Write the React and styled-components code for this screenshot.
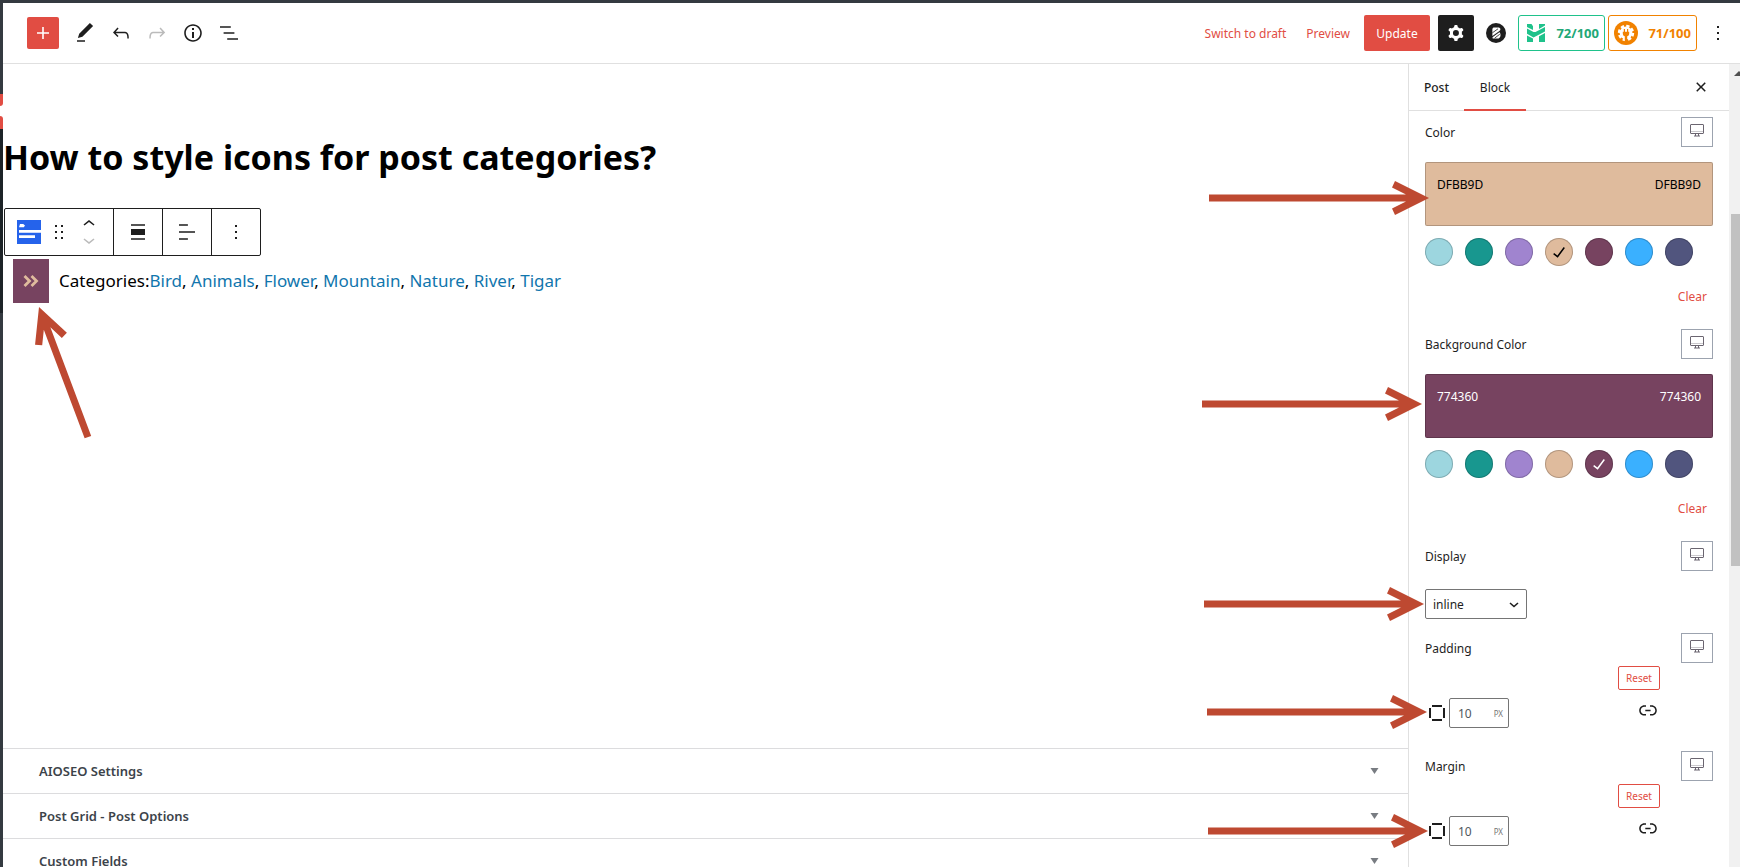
import React from "react";
import styled, { createGlobalStyle } from "styled-components";

const GlobalStyle = createGlobalStyle`
  * { box-sizing: border-box; }
  body {
    margin: 0;
    overflow: hidden;
    background: #fff;
    color: #1e1e1e;
    font: 12px/20px "Noto Sans", "Open Sans", sans-serif;
  }
  button, input, select { font: inherit; color: inherit; }
  svg { display: block; flex: none; }
`;

/* ---------- frame ---------- */

const Frame = styled.div`
  display: flex;
  flex-direction: column;
  height: 100vh;
  border-top: 3px solid #343a40;
`;

const Shell = styled.div`
  display: flex;
  flex: 1;
  min-height: 0;
`;

const MenuStrip = styled.nav`
  display: flex;
  flex-direction: column;
  flex: none;
  width: 3px;
  background: #343a40;
`;

const StripPart = styled.div`
  height: ${(p) => p.$height}px;
  background: ${(p) => p.$color};
  border-radius: ${(p) => p.$radius || 0};
`;

const StripNotch = styled.div`
  background: #fff;
`;

const Page = styled.div`
  display: flex;
  flex-direction: column;
  flex: 1;
  min-width: 0;
`;

const Workspace = styled.div`
  display: flex;
  flex: 1;
  min-height: 0;
`;

/* ---------- top bar ---------- */

const TopBar = styled.header`
  display: flex;
  align-items: center;
  justify-content: space-between;
  flex: none;
  height: 61px;
  padding: 0 4px 0 24px;
  border-bottom: 1px solid #e0e0e0;
`;

const ToolGroup = styled.div`
  display: flex;
  align-items: center;
`;

const IconButton = styled.button`
  display: flex;
  align-items: center;
  justify-content: center;
  width: ${(p) => p.$width || 36}px;
  height: 36px;
  padding: 0;
  border: 0;
  border-radius: 2px;
  background: ${(p) => (p.$dark ? "#1e1e1e" : "none")};
  color: ${(p) => (p.$dark ? "#fff" : p.$faded ? "#bbb" : "#1e1e1e")};
`;

const AddButton = styled(IconButton)`
  width: 32px;
  height: 32px;
  margin-right: 8px;
  background: #e14d43;
  color: #fff;
`;

const TextButton = styled.button`
  padding: 2px 10px 0;
  border: 0;
  background: none;
  color: #e14d43;
  white-space: nowrap;
`;

const UpdateButton = styled.button`
  width: 66px;
  height: 36px;
  margin: 0 8px 0 4px;
  padding: 2px 0 0;
  border: 0;
  border-radius: 2px;
  background: #e14d43;
  color: #fff;
`;

const ScoreButton = styled.button`
  display: flex;
  align-items: center;
  justify-content: space-between;
  width: ${(p) => p.$width}px;
  height: 36px;
  margin-right: 3px;
  padding: 0 5px 0 ${(p) => p.$inset}px;
  border: 1px solid ${(p) => p.$color};
  border-radius: 3px;
  background: #fff;
  color: ${(p) => p.$text};
  font-size: 13px;
  font-weight: 700;
`;

const PluginButtons = styled.div`
  display: flex;
  align-items: center;
  gap: 4px;
  margin-right: 4px;
`;

/* ---------- editor ---------- */

const Main = styled.main`
  display: flex;
  flex-direction: column;
  flex: 1;
  min-width: 0;
`;

const Canvas = styled.section`
  position: relative;
  flex: 1;
  min-height: 0;
  padding-top: 69px;
`;

const Title = styled.h1`
  margin: 0 0 27px;
  color: #000;
  font-size: 34px;
  line-height: 48px;
  font-weight: 700;
`;

const BlockToolbar = styled.div`
  display: flex;
  width: max-content;
  height: 48px;
  margin: 0 0 3px 1px;
  border: 1px solid #1e1e1e;
  border-radius: 2px;
`;

const ToolbarSegment = styled.div`
  display: flex;
  align-items: center;
  justify-content: center;
  min-width: 48px;
  padding: ${(p) => (p.$wide ? "0 6px 0 12px" : 0)};

  & + & {
    border-left: 1px solid #1e1e1e;
    min-width: 49px;
  }
`;

const BlockTypeButton = styled(IconButton)`
  width: 24px;
  margin-right: 6px;
`;

const Movers = styled.div`
  display: flex;
  flex-direction: column;
`;

const MoverButton = styled(IconButton)`
  height: 16px;
`;

const CategoryLine = styled.div`
  display: flex;
  align-items: center;
  margin-left: 10px;
  color: #000;
  font-size: 17px;
  white-space: nowrap;
`;

const CategoryIcon = styled.span`
  display: flex;
  align-items: center;
  justify-content: center;
  width: 36px;
  height: 44px;
  margin-right: 10px;
  background: #774360;
  color: #dfbb9d;
`;

const CategoryLink = styled.a`
  color: #1176ad;
  text-decoration: none;
`;

const MetaBoxes = styled.section`
  flex: none;
  height: 119px;
  overflow: hidden;
`;

const MetaBoxToggle = styled.button`
  display: flex;
  align-items: center;
  justify-content: space-between;
  width: 100%;
  height: 45px;
  padding: 0 29px 0 36px;
  border: 0;
  border-top: 1px solid #dcdcde;
  background: #fff;
  color: #3c434a;
  font-size: 13px;
  font-weight: 600;
`;

/* ---------- sidebar ---------- */

const Sidebar = styled.aside`
  position: relative;
  flex: none;
  width: 321px;
  border-left: 1px solid #e0e0e0;
`;

const Tabs = styled.div`
  display: flex;
  align-items: stretch;
  height: 47px;
  border-bottom: 1px solid #e0e0e0;
`;

const Tab = styled.button`
  width: ${(p) => (p.$active ? 62 : 55)}px;
  margin-bottom: -1px;
  padding: 2px 0 0;
  border: 0;
  border-bottom: 2px solid ${(p) => (p.$active ? "#e14d43" : "transparent")};
  background: none;
  font-weight: ${(p) => (p.$active ? 400 : 500)};
`;

const TabClose = styled(IconButton)`
  height: auto;
  margin: 0 10px 0 auto;
`;

const Settings = styled.div`
  padding: 6px 16px 0;
`;

const FieldHead = styled.div`
  display: flex;
  align-items: center;
  justify-content: space-between;
  height: 30px;
`;

const FieldLabel = styled.label`
  padding-top: 2px;
`;

const DeviceButton = styled.button`
  display: flex;
  align-items: center;
  justify-content: center;
  width: 32px;
  height: 30px;
  padding: 0 0 3px;
  border: 1px solid #9ca3af;
  background: #fff;
  color: #6b6570;
`;

const ColorPreview = styled.div`
  display: flex;
  justify-content: space-between;
  height: 64px;
  margin: 15px 0 12px;
  padding: 12px 11px;
  border: 1px solid rgba(0, 0, 0, 0.2);
  border-radius: 2px;
  background: ${(p) => p.$color};
  color: ${(p) => p.$text};
`;

const SwatchList = styled.div`
  display: flex;
  gap: 12px;
`;

const Swatch = styled.button`
  display: flex;
  align-items: center;
  justify-content: center;
  width: 28px;
  height: 28px;
  padding: 0;
  border: 0;
  border-radius: 50%;
  background: ${(p) => p.$color};
  box-shadow: inset 0 0 0 1px rgba(0, 0, 0, 0.2);
  color: ${(p) => p.$mark};
`;

const ClearButton = styled.button`
  display: block;
  height: 30px;
  margin: 15px 0 18px auto;
  padding: 2px 6px 0;
  border: 0;
  background: none;
  color: #e14d43;
`;

const SelectWrap = styled.div`
  position: relative;
  width: 102px;
  margin: 18px 0 14px;
`;

const Select = styled.select`
  display: block;
  width: 100%;
  height: 30px;
  padding: 2px 24px 0 7px;
  border: 1px solid #757575;
  border-radius: 2px;
  background: #fff;
  appearance: none;
`;

const SelectArrow = styled.span`
  position: absolute;
  top: 9px;
  right: 7px;
  pointer-events: none;
`;

const Spacing = styled.div`
  display: flex;
  flex-direction: column;
  gap: 8px;
  width: 235px;
  margin: 3px 0 23px;
`;

const ResetButton = styled.button`
  align-self: flex-end;
  width: 42px;
  height: 24px;
  padding: 0;
  border: 1px solid #e14d43;
  border-radius: 2px;
  background: #fff;
  color: #e14d43;
  font-size: 10px;
`;

const SpacingRow = styled.div`
  display: flex;
  align-items: flex-start;
  justify-content: space-between;
`;

const UnitField = styled.div`
  display: flex;
  align-items: center;
`;

const UnitBox = styled.div`
  display: flex;
  align-items: center;
  width: 60px;
  height: 30px;
  padding: 1px 5px 0 8px;
  border: 1px solid #757575;
  border-radius: 2px;
  color: #50575e;
`;

const UnitInput = styled.input`
  flex: 1;
  min-width: 0;
  width: 0;
  padding: 0;
  border: 0;
  background: none;
`;

const Unit = styled.span`
  color: #757575;
  font-size: 8px;
`;

const LinkButton = styled(IconButton)`
  width: 24px;
  height: 24px;
`;

/* ---------- scrollbar ---------- */

const ScrollTrack = styled.div`
  display: flex;
  flex-direction: column;
  flex: none;
  width: 11px;
  padding-left: 2px;
  overflow: hidden;
  background: #f1f1f1;
`;

const ScrollUp = styled.div`
  height: 150px;
  padding: 7px 0 0 2px;
`;

const ScrollThumb = styled.div`
  height: 352px;
  background: #c1c1c1;
`;

/* ---------- annotations ---------- */

const ArrowSvg = styled.svg`
  position: absolute;
  left: ${(p) => p.$x}px;
  top: ${(p) => p.$y}px;
  overflow: visible;
  pointer-events: none;
`;

function Arrow({ x, y, length = 220, angle = 0 }) {
  const shape = `${-length},-3.5 -23,-3.5 -37,-10.5 -34,-17 0,0 -34,17 -37,10.5 -23,3.5 ${-length},3.5`;
  return (
    <ArrowSvg $x={x} $y={y} width="1" height="1" aria-hidden="true">
      <polygon points={shape} fill="#be4931" transform={`rotate(${angle})`} />
    </ArrowSvg>
  );
}

/* ---------- icons ---------- */

const PATHS = {
  plus: "M18 11.2h-5.2V6h-1.6v5.2H6v1.6h5.2V18h1.6v-5.2H18z",
  edit: "M20.1 5.1L16.9 2 6.2 12.7l-1.3 4.4 4.5-1.3L20.1 5.1zM4 20.8h8v-1.5H4v1.5z",
  undo: "M18.3 11.7c-.6-.6-1.4-.9-2.3-.9H6.7l2.9-3.3-1.1-1-4.5 5L8.5 16l1-1-2.7-2.7H16c.5 0 .9.2 1.3.5 1 1 1 3.4 1 4.5v.3h1.5v-.2c0-1.5 0-4.3-1.5-5.7z",
  redo: "M15.6 6.5l-1.1 1 2.9 3.3H8c-.9 0-1.7.3-2.3.9-1.4 1.5-1.4 4.2-1.4 5.6v.2h1.5v-.3c0-1.1 0-3.5 1-4.5.3-.3.7-.5 1.3-.5h9.2L14.5 15l1.1 1.1 4.6-4.6-4.6-5z",
  info: "M12 3.2c-4.8 0-8.8 3.9-8.8 8.8 0 4.8 3.9 8.8 8.8 8.8 4.8 0 8.8-3.9 8.8-8.8 0-4.8-4-8.8-8.8-8.8zm0 16c-4 0-7.2-3.3-7.2-7.2C4.8 8 8 4.8 12 4.8s7.2 3.3 7.2 7.2c0 4-3.2 7.2-7.2 7.2zM11 17h2v-6h-2v6zm0-8h2V7h-2v2z",
  list: "M13.8 5.2H3v1.5h10.8V5.2zm-3.6 12v1.5H21v-1.5H10.2zm7.2-6H6.6v1.5h10.8v-1.5z",
  cog: "M10.289 4.836A1 1 0 0111.275 4h1.306a1 1 0 01.987.836l.244 1.466c.787.26 1.503.679 2.108 1.218l1.393-.522a1 1 0 011.216.437l.653 1.13a1 1 0 01-.23 1.273l-1.148.944a6.025 6.025 0 010 2.435l1.149.946a1 1 0 01.23 1.272l-.653 1.13a1 1 0 01-1.216.437l-1.394-.522c-.605.54-1.32.958-2.108 1.218l-.244 1.466a1 1 0 01-.987.836h-1.306a1 1 0 01-.986-.836l-.244-1.466a5.995 5.995 0 01-2.108-1.218l-1.394.522a1 1 0 01-1.217-.436l-.653-1.131a1 1 0 01.23-1.272l1.149-.946a6.026 6.026 0 010-2.435l-1.148-.944a1 1 0 01-.23-1.272l.653-1.131a1 1 0 011.217-.437l1.393.522a5.994 5.994 0 012.108-1.218l.244-1.466zM14.929 12a3 3 0 11-6 0 3 3 0 016 0z",
  more: "M13 19h-2v-2h2v2zm0-6h-2v-2h2v2zm0-6h-2V5h2v2z",
  close: "M12 13.06l3.712 3.713 1.061-1.06L13.061 12l3.712-3.712-1.06-1.06L12 10.938 8.288 7.227l-1.061 1.06L10.939 12l-3.712 3.712 1.06 1.061L12 13.061z",
  drag: "M8 7h2V5H8v2zm0 6h2v-2H8v2zm0 6h2v-2H8v2zm6-14v2h2V5h-2zm0 8h2v-2h-2v2zm0 6h2v-2h-2v2z",
  up: "M6.5 12.4L12 8l5.5 4.4-.9 1.2L12 10l-4.5 3.6-1-1.2z",
  down: "M17.5 11.6L12 16l-5.5-4.4.9-1.2L12 14l4.5-3.6 1 1.2z",
  align: "M5 15h14V9H5v6zm0 4.8h14v-1.5H5v1.5zM5 4.2v1.5h14V4.2H5z",
  textAlign: "M4 19.8h8.9v-1.5H4v1.5zm8.9-15.6H4v1.5h8.9V4.2zm-8.9 7v1.5h16v-1.5H4z",
  link: "M15.6 7.2H14v1.5h1.6c2 0 3.7 1.7 3.7 3.7s-1.7 3.7-3.7 3.7H14v1.5h1.6c2.8 0 5.2-2.3 5.2-5.2 0-2.9-2.3-5.2-5.2-5.2zM4.7 12.4c0-2 1.7-3.7 3.7-3.7H10V7.2H8.4c-2.9 0-5.2 2.3-5.2 5.2 0 2.9 2.3 5.2 5.2 5.2H10v-1.5H8.4c-2 0-3.7-1.7-3.7-3.7zm4.6.9h5.3v-1.5H9.3v1.5z",
  sides: "M7 6h10V4H7zM7 20h10v-2H7zM4 17h2V7H4zM18 7v10h2V7z",
  check: "M16.7 7.1l-6.3 8.5-3.3-2.5-.9 1.2 4.5 3.4L17.9 8z",
};

function Icon({ name, size = 24 }) {
  return (
    <svg width={size} height={size} viewBox="0 0 24 24" fill="currentColor" fillRule="evenodd" aria-hidden="true">
      <path d={PATHS[name]} />
    </svg>
  );
}

const MonitorIcon = () => (
  <svg width="14" height="13" viewBox="0 0 14 13" fill="none" stroke="currentColor" aria-hidden="true">
    <rect x="0.5" y="0.5" width="13" height="9" rx="0.5" />
    <path d="M1 7.5h12" strokeOpacity="0.35" />
    <path d="M5.5 10v2M8.5 10v2M4 12h6" />
  </svg>
);

const BlocksLogo = () => (
  <svg width="20" height="20" viewBox="0 0 20 20" aria-hidden="true">
    <circle cx="10" cy="10" r="10" fill="#1e1e1e" />
    <path d="M7.4 4.4h4.8c2.4 0 2.8 2.4 1.2 3.6L6.4 13V5.8z" fill="#fff" />
    <path d="M13.4 9.2c1.8 1.2 1.6 6.4-2 6.4H7.4c-.9 0-1.3-1-.6-1.6z" fill="#fff" />
    <path d="M6.4 9.8l5.6-4M8.6 15.2l5.2-4" stroke="#1e1e1e" strokeWidth="0.8" />
  </svg>
);

const HeadlineLogo = () => (
  <svg width="18" height="18" viewBox="0 0 18 18" fill="#1fc28b" aria-hidden="true">
    <path d="M0 0h4.5L6 2.2V6L0 3zM12 0h6v1.6l-6 3.5zM18 3v4.4L6.5 13.4 0 9.8V4.6l6.5 3.5h2zM0 11.4l6 3.2V18H0zM12 12.2l6-3.2v9h-6z" />
  </svg>
);

const SeoLogo = () => (
  <svg width="24" height="24" viewBox="0 0 24 24" aria-hidden="true">
    <circle cx="12" cy="12" r="12" fill="#f18200" />
    <circle cx="12" cy="12" r="6.4" fill="#fff" />
    <circle cx="12" cy="12" r="7" fill="none" stroke="#fff" strokeWidth="2.4" strokeDasharray="3.3 2.2" />
    <path d="M10.4 8v3M13.6 8v3" stroke="#f18200" strokeWidth="1.2" />
    <path d="M8.8 10.8h6.4v1.6c0 1.6-.9 2.5-2 2.9V21h-2.4v-5.7c-1.1-.4-2-1.3-2-2.9z" fill="#f18200" />
  </svg>
);

const BlockTypeIcon = () => (
  <svg width="24" height="24" viewBox="0 0 24 24" aria-hidden="true">
    <path fill="#2563eb" d="M0 0h24v24H0z" />
    <path fill="#fff" d="M3 4h3.2l1.8 1.6L6.8 7.2H2zM2 10h22v2.8H2zM2 15.2h16V18H2z" />
  </svg>
);

const DoubleAngle = () => (
  <svg width="17" height="12" viewBox="0 0 17 12" fill="none" stroke="currentColor" strokeWidth="2.8" aria-hidden="true">
    <path d="M1.5 1l5 5-5 5M8.5 1l5 5-5 5" />
  </svg>
);

const Triangle = () => (
  <svg width="9" height="6" viewBox="0 0 9 6" aria-hidden="true">
    <path d="M0.5 0h8l-4 6z" fill="#787c82" />
  </svg>
);

const SelectChevron = () => (
  <svg width="12" height="12" viewBox="0 0 12 12" fill="none" stroke="#1e1e1e" strokeWidth="1.6" aria-hidden="true">
    <path d="M2 5l4 3.5 4-3.5" />
  </svg>
);

/* ---------- composed parts ---------- */

const COLORS = ["#9dd6df", "#18978f", "#a084cf", "#dfbb9d", "#774360", "#3ab0ff", "#51557e"];
const CATEGORIES = ["Bird", "Animals", "Flower", "Mountain", "Nature", "River", "Tigar"];
const META_BOXES = ["AIOSEO Settings", "Post Grid - Post Options", "Custom Fields"];
const ARROWS = [
  { x: 20, y: 134 },
  { x: 13, y: 340 },
  { x: 15, y: 540 },
  { x: 18, y: 648 },
  { x: 19, y: 767 },
];

function Field({ label, htmlFor }) {
  return (
    <FieldHead>
      <FieldLabel as={htmlFor ? "label" : "span"} htmlFor={htmlFor}>{label}</FieldLabel>
      <DeviceButton aria-label={`${label} device`}>
        <MonitorIcon />
      </DeviceButton>
    </FieldHead>
  );
}

function ColorField({ label, value, text }) {
  const code = value.slice(1).toUpperCase();
  return (
    <>
      <Field label={label} />
      <ColorPreview $color={value} $text={text}>
        <span>{code}</span>
        <span>{code}</span>
      </ColorPreview>
      <SwatchList>
        {COLORS.map((c) => (
          <Swatch key={c} $color={c} $mark={text} aria-label={c} aria-pressed={c === value}>
            {c === value && <Icon name="check" />}
          </Swatch>
        ))}
      </SwatchList>
      <ClearButton>Clear</ClearButton>
    </>
  );
}

function SpacingField({ label, id }) {
  return (
    <>
      <Field label={label} htmlFor={id} />
      <Spacing>
        <ResetButton>Reset</ResetButton>
        <SpacingRow>
          <UnitField>
            <Icon name="sides" />
            <UnitBox>
              <UnitInput id={id} type="text" defaultValue="10" />
              <Unit>PX</Unit>
            </UnitBox>
          </UnitField>
          <LinkButton aria-label="Unlink sides">
            <Icon name="link" />
          </LinkButton>
        </SpacingRow>
      </Spacing>
    </>
  );
}

export default function App() {
  return (
    <Frame>
      <GlobalStyle />
      <Shell>
        <MenuStrip aria-label="Admin menu">
          <StripPart $height={91} $color="#343a40" />
          <StripNotch>
            <StripPart $height={12} $color="#e14d43" $radius="0 0 3px 0" />
            <StripPart $height={10} $color="#fff" />
            <StripPart $height={13} $color="#e14d43" $radius="0 3px 0 0" />
          </StripNotch>
          <StripPart $height={184} $color="#1d2327" />
        </MenuStrip>
        <Page>
          <TopBar>
            <ToolGroup>
              <AddButton aria-label="Add block"><Icon name="plus" /></AddButton>
              <IconButton aria-label="Tools"><Icon name="edit" /></IconButton>
              <IconButton aria-label="Undo"><Icon name="undo" /></IconButton>
              <IconButton aria-label="Redo" $faded><Icon name="redo" /></IconButton>
              <IconButton aria-label="Details"><Icon name="info" /></IconButton>
              <IconButton aria-label="List view"><Icon name="list" /></IconButton>
            </ToolGroup>
            <ToolGroup>
              <TextButton>Switch to draft</TextButton>
              <TextButton>Preview</TextButton>
              <UpdateButton>Update</UpdateButton>
              <PluginButtons>
                <IconButton aria-label="Settings" $dark><Icon name="cog" /></IconButton>
                <IconButton aria-label="Blocks"><BlocksLogo /></IconButton>
              </PluginButtons>
              <ScoreButton $color="#1fc28b" $text="#22a877" $width={87} $inset={8}>
                <HeadlineLogo />
                <span>72/100</span>
              </ScoreButton>
              <ScoreButton $color="#f18200" $text="#f18200" $width={89} $inset={5}>
                <SeoLogo />
                <span>71/100</span>
              </ScoreButton>
              <IconButton aria-label="Options"><Icon name="more" /></IconButton>
            </ToolGroup>
          </TopBar>
          <Workspace>
            <Main>
              <Canvas>
                <Title>How to style icons for post categories?</Title>
                <BlockToolbar role="toolbar">
                  <ToolbarSegment $wide>
                    <BlockTypeButton aria-label="Block type"><BlockTypeIcon /></BlockTypeButton>
                    <IconButton aria-label="Drag" $width={24}><Icon name="drag" /></IconButton>
                    <Movers>
                      <MoverButton aria-label="Move up"><Icon name="up" /></MoverButton>
                      <MoverButton aria-label="Move down" $faded><Icon name="down" /></MoverButton>
                    </Movers>
                  </ToolbarSegment>
                  <ToolbarSegment>
                    <IconButton aria-label="Align"><Icon name="align" /></IconButton>
                  </ToolbarSegment>
                  <ToolbarSegment>
                    <IconButton aria-label="Align text"><Icon name="textAlign" /></IconButton>
                  </ToolbarSegment>
                  <ToolbarSegment>
                    <IconButton aria-label="More options"><Icon name="more" /></IconButton>
                  </ToolbarSegment>
                </BlockToolbar>
                <CategoryLine>
                  <CategoryIcon><DoubleAngle /></CategoryIcon>
                  <span>
                    Categories:
                    {CATEGORIES.map((name, i) => (
                      <React.Fragment key={name}>
                        {i > 0 && ", "}
                        <CategoryLink href="#">{name}</CategoryLink>
                      </React.Fragment>
                    ))}
                  </span>
                </CategoryLine>
                <Arrow x={36} y={243} length={139} angle={-110.6} />
              </Canvas>
              <MetaBoxes>
                {META_BOXES.map((name) => (
                  <MetaBoxToggle key={name}>
                    <span>{name}</span>
                    <Triangle />
                  </MetaBoxToggle>
                ))}
              </MetaBoxes>
            </Main>
            <Sidebar>
              <Tabs>
                <Tab>Post</Tab>
                <Tab $active>Block</Tab>
                <TabClose aria-label="Close settings"><Icon name="close" /></TabClose>
              </Tabs>
              <Settings>
                <ColorField label="Color" value="#dfbb9d" text="#000" />
                <ColorField label="Background Color" value="#774360" text="#fff" />
                <Field label="Display" htmlFor="display" />
                <SelectWrap>
                  <Select id="display" defaultValue="inline">
                    <option>inline</option>
                    <option>block</option>
                  </Select>
                  <SelectArrow><SelectChevron /></SelectArrow>
                </SelectWrap>
                <SpacingField label="Padding" id="padding" />
                <SpacingField label="Margin" id="margin" />
              </Settings>
              {ARROWS.map((a) => (
                <Arrow key={a.y} {...a} />
              ))}
            </Sidebar>
            <ScrollTrack>
              <ScrollUp>
                <svg width="14" height="5" viewBox="0 0 14 5" aria-hidden="true">
                  <path d="M1 5l5-5 5 5z" fill="#505050" />
                </svg>
              </ScrollUp>
              <ScrollThumb />
            </ScrollTrack>
          </Workspace>
        </Page>
      </Shell>
    </Frame>
  );
}
